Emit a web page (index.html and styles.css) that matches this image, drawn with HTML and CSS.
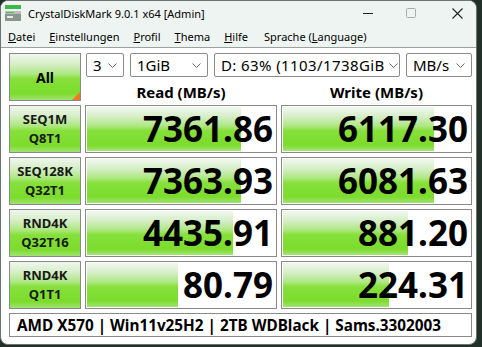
FILE: index.html
```html
<!DOCTYPE html>
<html lang="de">
<head>
    <meta charset="UTF-8">
    <title>CrystalDiskMark 9.0.1 x64 [Admin]</title>
    <link rel="stylesheet" href="styles.css">
</head>
<body>
<div class="window">
    <div class="titlebar">
        <svg class="app-icon" width="18" height="18" viewBox="0 0 18 18">
            <rect x="1" y="1" width="16" height="4" fill="#3cb84a"/>
            <rect x="1" y="7" width="16" height="10" fill="#8c9490"/>
            <rect x="1" y="7" width="16" height="3" fill="#b8c0bc"/>
            <rect x="2" y="8" width="8" height="1" fill="#4cc04c"/>
            <rect x="3" y="12" width="6" height="2" fill="#e8ece9"/>
        </svg>
        <span class="title">CrystalDiskMark 9.0.1 x64 [Admin]</span>
        <div class="caption">
            <span class="cap-btn"><svg width="10" height="10" viewBox="0 0 10 10"><line x1="0" y1="5.5" x2="10" y2="5.5" stroke="#222" stroke-width="1"/></svg></span>
            <span class="cap-btn"><svg width="10" height="10" viewBox="0 0 10 10"><rect x="0.5" y="0.5" width="9" height="9" rx="1" fill="none" stroke="#aaa" stroke-width="1"/></svg></span>
            <span class="cap-btn close"><svg width="11" height="11" viewBox="0 0 11 11"><path d="M0.5 0.5 L10.5 10.5 M10.5 0.5 L0.5 10.5" stroke="#222" stroke-width="1.1"/></svg></span>
        </div>
    </div>

    <nav class="menubar">
        <span><u>D</u>atei</span>
        <span><u>E</u>instellungen</span>
        <span><u>P</u>rofil</span>
        <span><u>T</u>hema</span>
        <span><u>H</u>ilfe</span>
        <span>Sprache (<u>L</u>anguage)</span>
    </nav>

    <main class="content">
        <div class="grid">
            <button class="all">All</button>
            <div class="top-right">
                <div class="selects">
                    <div class="select s-count"><span>3</span><svg class="chev" width="9" height="5" viewBox="0 0 9 5"><path d="M0.5 0.5 L4.5 4.5 L8.5 0.5" fill="none" stroke="#666"/></svg></div>
                    <div class="select s-size"><span>1GiB</span><svg class="chev" width="9" height="5" viewBox="0 0 9 5"><path d="M0.5 0.5 L4.5 4.5 L8.5 0.5" fill="none" stroke="#666"/></svg></div>
                    <div class="select s-drive"><span>D: 63% (1103/1738GiB</span><svg class="chev" width="9" height="5" viewBox="0 0 9 5"><path d="M0.5 0.5 L4.5 4.5 L8.5 0.5" fill="none" stroke="#666"/></svg></div>
                    <div class="select s-unit"><span>MB/s</span><svg class="chev" width="9" height="5" viewBox="0 0 9 5"><path d="M0.5 0.5 L4.5 4.5 L8.5 0.5" fill="none" stroke="#666"/></svg></div>
                </div>
                <div class="headers">
                    <div>Read (MB/s)</div>
                    <div>Write (MB/s)</div>
                </div>
            </div>

            <div class="label">SEQ1M<br>Q8T1</div>
            <div class="result"><div class="bar" style="width: 81%"></div><span>7361.86</span></div>
            <div class="result"><div class="bar" style="width: 80%"></div><span>6117.30</span></div>

            <div class="label">SEQ128K<br>Q32T1</div>
            <div class="result"><div class="bar" style="width: 81%"></div><span>7363.93</span></div>
            <div class="result"><div class="bar" style="width: 80%"></div><span>6081.63</span></div>

            <div class="label">RND4K<br>Q32T16</div>
            <div class="result"><div class="bar" style="width: 77%"></div><span>4435.91</span></div>
            <div class="result"><div class="bar" style="width: 66%"></div><span>881.20</span></div>

            <div class="label">RND4K<br>Q1T1</div>
            <div class="result"><div class="bar" style="width: 48%"></div><span>80.79</span></div>
            <div class="result"><div class="bar" style="width: 56%"></div><span>224.31</span></div>

            <div class="footer">AMD X570 | Win11v25H2 | 2TB WDBlack | Sams.3302003</div>
        </div>
    </main>
</div>
</body>
</html>
```

FILE: styles.css
```css
/* CrystalDiskMark Fenster */
* { box-sizing: border-box; }

body {
    margin: 0;
    background-color: #22302a;
    font-family: 'Noto Sans', 'Open Sans', sans-serif;
    color: #000;
}

.window {
    width: 477px;
    height: 345px;
    background: #fff;
    border: 1px solid #6c7470;
    border-radius: 8px;
    overflow: hidden;
}

.titlebar {
    display: flex;
    align-items: center;
    height: 24px;
    background: #eef4f1;
    padding-left: 3px;
}

.app-icon { margin-right: 6px; }

.title { font-size: 11px; }

.caption { display: flex; margin-left: auto; height: 100%; }

.cap-btn {
    width: 43px;
    display: flex;
    align-items: center;
    justify-content: center;
}

.cap-btn.close { width: 44px; padding-left: 6px; }

.menubar {
    display: flex;
    height: 23px;
    align-items: center;
    background: #eef4f1;
    border-bottom: 1px solid #9aa09c;
    font-size: 11px;
}

.menubar span { padding: 0 7px; }
.menubar span:last-child { padding-left: 9px; }

.content { padding: 5px 0 0 8px; }

.grid {
    display: grid;
    grid-template-columns: 72px 192px 191px;
    grid-template-rows: repeat(5, 48px) 24px;
    gap: 4px;
}

.all, .label, .bar {
    background: linear-gradient(#f0f7ee 0%, #d6eec8 22%, #ace77e 44%, #86e03a 54%, #7cdc2c 86%, #a2e374 100%);
}

.all {
    position: relative;
    border: 1px solid #8a8a8a;
    font-family: inherit;
    font-size: 14px;
    font-weight: bold;
    padding: 0;
    margin: 0;
}

.all::after {
    content: "";
    position: absolute;
    right: 0;
    bottom: 0;
    border-style: solid;
    border-width: 0 0 8px 8px;
    border-color: transparent transparent #f07a1a transparent;
}

.top-right { grid-column: 2 / 4; }

.selects {
    display: flex;
    gap: 6px;
    height: 24px;
    margin-left: 1px;
}

.select {
    display: flex;
    align-items: center;
    justify-content: space-between;
    border: 1px solid #8c8c8c;
    border-radius: 2px;
    padding: 0 6px 0 6px;
    font-size: 15px;
    white-space: nowrap;
}

.select .chev { flex-shrink: 0; margin-left: 4px; }

.s-count { width: 38px; }
.s-size { width: 78px; }
.s-drive { width: 186px; }
.s-drive span { letter-spacing: 0.4px; }
.s-unit { width: 66px; }

.headers {
    display: grid;
    grid-template-columns: 192px 191px;
    gap: 4px;
    height: 24px;
    font-size: 15px;
    font-weight: bold;
    text-align: center;
    line-height: 24px;
    padding-top: 3px;
}

.label {
    border: 1px solid #8a8a8a;
    font-size: 13px;
    font-weight: bold;
    line-height: 19px;
    text-align: center;
    padding-top: 4px;
    color: #1a1a1a;
}

.result {
    position: relative;
    border: 1px solid #8a8a8a;
    background: #fff;
    text-align: right;
}

.bar {
    position: absolute;
    left: 1px;
    top: 1px;
    bottom: 1px;
}

.result span {
    position: relative;
    font-size: 35px;
    font-weight: bold;
    line-height: 46px;
    padding-right: 3px;
}

.footer {
    grid-column: 1 / 4;
    border: 1px solid #8a8a8a;
    font-size: 15.3px;
    font-weight: bold;
    line-height: 22px;
    padding-left: 7px;
}
```
